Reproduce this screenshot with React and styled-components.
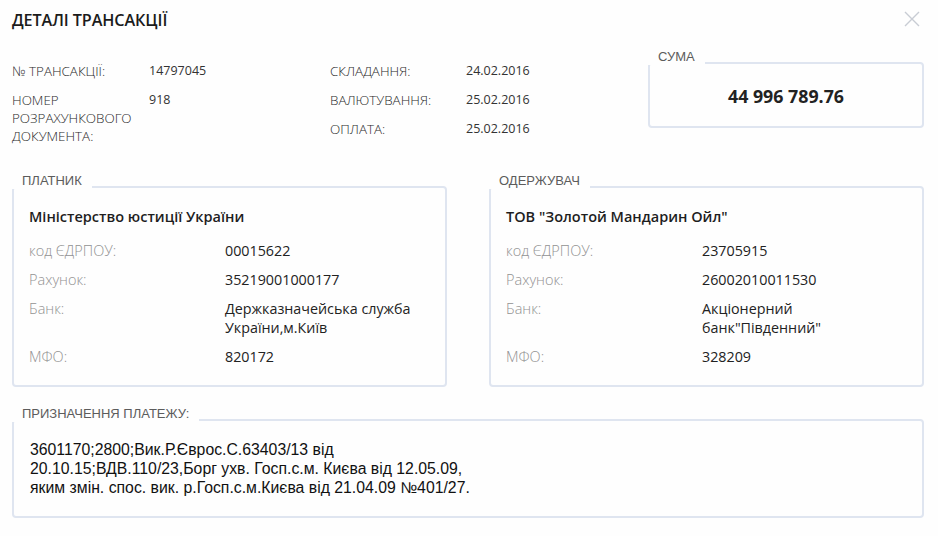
import React from "react";
import styled, { createGlobalStyle } from "styled-components";

const GlobalStyle = createGlobalStyle`
  html, body { margin: 0; padding: 0; background: #ffffff; }
  body { font-family: "Open Sans", "Liberation Sans", sans-serif; color: #333; }
  * { box-sizing: border-box; }
`;

const Page = styled.div`
  width: 938px;
  height: 536px;
  padding: 9px 14px 0 12px;
  background: #fefefe;
`;

const Header = styled.div`
  display: flex;
  justify-content: space-between;
  align-items: flex-start;
`;

const Title = styled.h1`
  margin: 0;
  font-size: 16.2px;
  line-height: 22px;
  font-weight: 600;
  color: #1b1b1b;
  letter-spacing: -0.1px;
`;

const CloseButton = styled.button`
  border: 0;
  background: none;
  padding: 0;
  margin: 2px 4px 0 0;
  width: 16px;
  height: 16px;
  cursor: pointer;
  display: flex;
  align-items: center;
  justify-content: center;
`;

const TopSection = styled.div`
  display: grid;
  grid-template-columns: 318px 318px 276px;
  margin-top: 31px;
`;

const InfoList = styled.div`
  display: grid;
  grid-template-columns: ${(p) => p.$labelWidth}px 1fr;
  row-gap: 11px;
  align-content: start;
  line-height: 18px;
`;

const InfoLabel = styled.div`
  font-size: 13.4px;
  font-weight: 300;
  color: #2a2a2a;
  padding-right: 4px;
`;

const InfoValue = styled.div`
  font-size: 12.5px;
  font-weight: 400;
  color: #333;
`;

const Group = styled.div`
  position: relative;
  border: 2px solid #dfe5f0;
  border-radius: 4px;
  background: #fefefe;
`;

const Legend = styled.span`
  position: absolute;
  left: -2px;
  top: -15px;
  height: 16px;
  padding: 0 10px;
  background: #fefefe;
  font-family: "Liberation Sans", Arial, sans-serif;
  font-size: 13px;
  line-height: 16px;
  color: #5c5c5c;
  white-space: nowrap;
`;

const SumGroup = styled(Group)`
  height: 66px;
  display: flex;
  align-items: center;
  justify-content: center;
`;

const Amount = styled.div`
  font-size: 17.8px;
  line-height: 24px;
  font-weight: 700;
  color: #222;
  padding-top: 2px;
`;

const Parties = styled.div`
  display: grid;
  grid-template-columns: 1fr 1fr;
  column-gap: 42px;
  margin-top: 41px;
`;

const PartyGroup = styled(Group)`
  padding: 19px 15px 19.5px;
`;

const PartyName = styled.div`
  font-size: 14.5px;
  line-height: 20px;
  font-weight: 600;
  color: #1e1e1e;
  margin-bottom: 13.5px;
`;

const Fields = styled.div`
  display: grid;
  grid-template-columns: 196px 1fr;
  row-gap: 10px;
  line-height: 19px;
`;

const FieldLabel = styled.div`
  font-size: 14.5px;
  font-weight: 300;
  color: #929292;
`;

const FieldValue = styled.div`
  font-size: 14.3px;
  font-weight: 400;
  color: #222;
  padding-right: 6px;
`;

const PurposeGroup = styled(Group)`
  margin-top: 32px;
  padding: 18.5px 16px 19.5px;
`;

const PurposeText = styled.p`
  margin: 0;
  font-family: "Liberation Sans", Arial, sans-serif;
  font-size: 15.8px;
  line-height: 19px;
  color: #111;
`;

const CloseIcon = () => (
  <svg width="16" height="16" viewBox="0 0 16 16">
    <path d="M1 1 L15 15 M15 1 L1 15" stroke="#c8ccd4" strokeWidth="1.4" fill="none" />
  </svg>
);

const Party = ({ legend, name, code, account, bank, mfo }) => (
  <PartyGroup>
    <Legend>{legend}</Legend>
    <PartyName>{name}</PartyName>
    <Fields>
      <FieldLabel>код ЄДРПОУ:</FieldLabel>
      <FieldValue>{code}</FieldValue>
      <FieldLabel>Рахунок:</FieldLabel>
      <FieldValue>{account}</FieldValue>
      <FieldLabel>Банк:</FieldLabel>
      <FieldValue>{bank}</FieldValue>
      <FieldLabel>МФО:</FieldLabel>
      <FieldValue>{mfo}</FieldValue>
    </Fields>
  </PartyGroup>
);

export default function App() {
  return (
    <>
      <GlobalStyle />
      <Page>
        <Header>
          <Title>ДЕТАЛІ ТРАНСАКЦІЇ</Title>
          <CloseButton aria-label="Закрити">
            <CloseIcon />
          </CloseButton>
        </Header>

        <TopSection>
          <InfoList $labelWidth={137}>
            <InfoLabel>№ ТРАНСАКЦІЇ:</InfoLabel>
            <InfoValue>14797045</InfoValue>
            <InfoLabel>НОМЕР РОЗРАХУНКОВОГО ДОКУМЕНТА:</InfoLabel>
            <InfoValue>918</InfoValue>
          </InfoList>
          <InfoList $labelWidth={136}>
            <InfoLabel>СКЛАДАННЯ:</InfoLabel>
            <InfoValue>24.02.2016</InfoValue>
            <InfoLabel>ВАЛЮТУВАННЯ:</InfoLabel>
            <InfoValue>25.02.2016</InfoValue>
            <InfoLabel>ОПЛАТА:</InfoLabel>
            <InfoValue>25.02.2016</InfoValue>
          </InfoList>
          <SumGroup>
            <Legend>СУМА</Legend>
            <Amount>44 996 789.76</Amount>
          </SumGroup>
        </TopSection>

        <Parties>
          <Party
            legend="ПЛАТНИК"
            name="Міністерство юстиції України"
            code="00015622"
            account="35219001000177"
            bank="Держказначейська служба України,м.Київ"
            mfo="820172"
          />
          <Party
            legend="ОДЕРЖУВАЧ"
            name={'ТОВ "Золотой Мандарин Ойл"'}
            code="23705915"
            account="26002010011530"
            bank={'Акціонерний банк"Південний"'}
            mfo="328209"
          />
        </Parties>

        <PurposeGroup>
          <Legend>ПРИЗНАЧЕННЯ ПЛАТЕЖУ:</Legend>
          <PurposeText>
            3601170;2800;Вик.Р.Єврос.С.63403/13 від
            <br />
            20.10.15;ВДВ.110/23,Борг ухв. Госп.с.м. Києва від 12.05.09,
            <br />
            яким змін. спос. вик. р.Госп.с.м.Києва від 21.04.09 №401/27.
          </PurposeText>
        </PurposeGroup>
      </Page>
    </>
  );
}
